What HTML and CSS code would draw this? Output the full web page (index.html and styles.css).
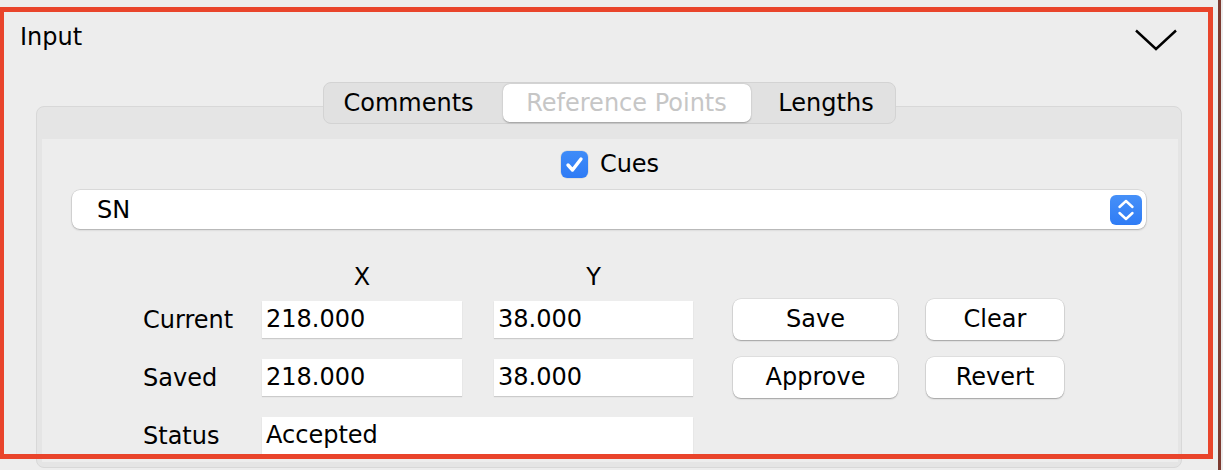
FILE: index.html
```html
<!DOCTYPE html>
<html>
<head>
<meta charset="utf-8">
<link rel="stylesheet" href="styles.css">
</head>
<body>
<div class="page">
  <div class="header">
    <span class="title">Input</span>
    <svg class="chevron" width="42" height="22" viewBox="0 0 42 22"><polyline points="1,1.5 21,20 41,1.5" fill="none" stroke="#000" stroke-width="2.4"/></svg>
  </div>

  <div class="tabs-wrap">
    <div class="tabs">
      <div class="tab tab-comments">Comments</div>
      <div class="tab tab-ref active">Reference Points</div>
      <div class="tab tab-len">Lengths</div>
    </div>
  </div>

  <div class="panel">
    <div class="inner">
      <div class="cues">
        <span class="checkbox">
          <svg width="27" height="27" viewBox="0 0 27 27"><polyline points="7,14 11.5,19 20,8" fill="none" stroke="#fff" stroke-width="3.4" stroke-linecap="round" stroke-linejoin="round"/></svg>
        </span>
        <span class="cues-label">Cues</span>
      </div>

      <div class="select">
        <span class="select-text">SN</span>
        <span class="stepper">
          <svg width="32" height="30" viewBox="0 0 32 30"><polyline points="9.5,12 16,6 22.5,12" fill="none" stroke="#fff" stroke-width="2.4" stroke-linecap="round" stroke-linejoin="round"/><polyline points="9.5,18 16,24 22.5,18" fill="none" stroke="#fff" stroke-width="2.4" stroke-linecap="round" stroke-linejoin="round"/></svg>
        </span>
      </div>

      <div class="grid">
        <div class="colhead cx">X</div>
        <div class="colhead cy">Y</div>

        <div class="label r2">Current</div>
        <div class="field fx r2">218.000</div>
        <div class="field fy r2">38.000</div>
        <div class="btn bsave r2">Save</div>
        <div class="btn bclear r2">Clear</div>

        <div class="label r3">Saved</div>
        <div class="field fx r3">218.000</div>
        <div class="field fy r3">38.000</div>
        <div class="btn bsave r3">Approve</div>
        <div class="btn bclear r3">Revert</div>

        <div class="label r4">Status</div>
        <div class="field fstatus r4">Accepted</div>
      </div>
    </div>
  </div>

  <div class="highlight"></div>
  <div class="window-edge"></div>
</div>
</body>
</html>
```

FILE: styles.css
```css
html, body {
  margin: 0;
  padding: 0;
}
body {
  background: #ececec;
  font-family: "DejaVu Sans", "Noto Sans", sans-serif;
  font-size: 24px;
  line-height: 28px;
  color: #000;
  overflow: hidden;
}
.page {
  position: relative;
  width: 1223px;
  height: 470px;
  background: #ededed;
}

.header {
  display: flex;
  justify-content: space-between;
  align-items: flex-start;
  padding: 23px 46px 0 20px;
  height: 28px;
}
.chevron {
  display: block;
  margin-top: 6px;
}

.tabs-wrap {
  display: flex;
  justify-content: center;
  margin: 31px 0 -18px 36px;
  width: 1146px;
  position: relative;
  z-index: 1;
}
.tabs {
  display: flex;
  align-items: center;
  height: 40px;
  padding: 0 1px;
  background: #e1e1e1;
  border: 1px solid #d3d3d3;
  border-radius: 8px;
}
.tab {
  height: 38px;
  line-height: 38px;
  text-align: center;
  white-space: nowrap;
}
.tab-comments { width: 178px; padding-right: 10px; box-sizing: border-box; }
.tab-ref { width: 248px; }
.tab-len { width: 143px; padding-left: 8px; box-sizing: border-box; }
.tab.active {
  background: #fff;
  border-radius: 7px;
  box-shadow: 0 0.5px 1.5px rgba(0,0,0,0.3);
  color: #c6c6c6;
  text-shadow: 0 1px 0 #fff, 1px 0 0 rgba(255,255,255,0.6);
}

.panel {
  margin-left: 36px;
  width: 1146px;
  box-sizing: border-box;
  background: #e5e5e5;
  border: 1px solid #d8d8d8;
  border-radius: 8px;
  padding: 32px 3px 5px 5px;
}
.inner {
  background: #ededed;
  padding-top: 11px;
  height: 312px;
}

.cues {
  display: flex;
  align-items: center;
  justify-content: center;
  gap: 12px;
  height: 28px;
}
.checkbox {
  display: block;
  width: 27px;
  height: 27px;
  border-radius: 6px;
  background: linear-gradient(#3f8cf8, #2f7bf5);
  box-shadow: 0 0 0 0.5px rgba(0,0,0,0.12);
}
.checkbox svg { display: block; }

.select {
  margin: 12px 32px 0 30px;
  height: 39px;
  box-sizing: border-box;
  background: #fff;
  border-radius: 8px;
  box-shadow: 0 0 0 0.5px rgba(0,0,0,0.14), 0 1px 2px rgba(0,0,0,0.22);
  display: flex;
  align-items: center;
  justify-content: space-between;
  padding: 0 4px 0 25px;
}
.stepper {
  display: block;
  width: 32px;
  height: 30px;
  border-radius: 6px;
  background: linear-gradient(#4690f8, #2f7cf5);
}
.stepper svg { display: block; }

.grid {
  display: grid;
  grid-template-columns: 119px 232px 239px 193px 138px;
  grid-template-rows: 19px 41px 41px 41px;
  row-gap: 17px;
  margin-top: 34px;
  padding-left: 101px;
  align-items: center;
}
.r2 { grid-row: 2; }
.r3 { grid-row: 3; }
.r4 { grid-row: 4; }
.colhead {
  grid-row: 1;
  align-self: start;
  height: 28px;
  text-align: center;
}
.cx { grid-column: 2; width: 200px; }
.cy { grid-column: 3; width: 199px; }

.label { grid-column: 1; }
.field {
  height: 37px;
  line-height: 37px;
  background: #fff;
  box-shadow: 0 1px 1px rgba(0,0,0,0.14);
  padding-left: 4px;
  box-sizing: border-box;
}
.fx { grid-column: 2; width: 200px; }
.fy { grid-column: 3; width: 199px; }
.fstatus { grid-column: 2 / 4; width: 431px; }

.btn {
  height: 41px;
  line-height: 40px;
  background: #fff;
  border-radius: 8px;
  box-shadow: 0 0 0 0.5px rgba(0,0,0,0.12), 0 1px 1.5px rgba(0,0,0,0.28);
  text-align: center;
}
.bsave { grid-column: 4; width: 165px; }
.bclear { grid-column: 5; width: 138px; }

.highlight {
  position: absolute;
  left: -1px;
  top: 7px;
  width: 1214px;
  height: 452px;
  box-sizing: border-box;
  border: 5px solid #e9442b;
  pointer-events: none;
}
.window-edge {
  position: absolute;
  left: 1218px;
  top: 0;
  width: 3px;
  height: 470px;
  background: #7c3a30;
}
```
